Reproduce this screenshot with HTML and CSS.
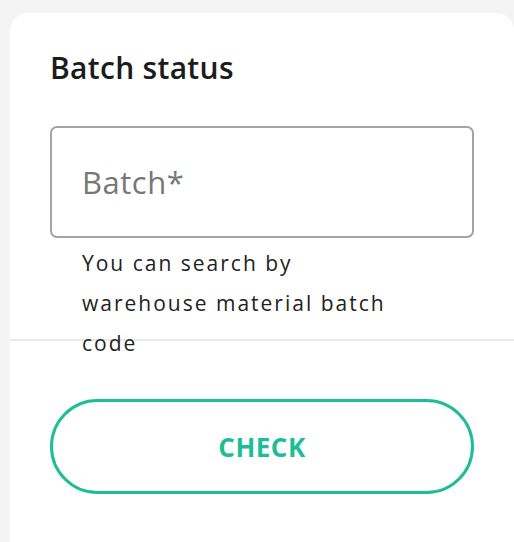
FILE: index.html
```html
<!DOCTYPE html>
<html>
<head>
<meta charset="utf-8">
<link rel="stylesheet" href="styles.css">
</head>
<body>
<div class="card">
  <div class="content">
    <h1 class="title">Batch status</h1>
    <div class="field">
      <span class="placeholder">Batch*</span>
    </div>
    <p class="helper">You can search by<br>warehouse material batch<br>code</p>
  </div>
  <div class="divider"></div>
  <div class="actions">
    <button class="check">CHECK</button>
  </div>
</div>
</body>
</html>
```
FILE: styles.css
```css
html, body {
  margin: 0;
  padding: 0;
  background: #f4f4f4;
  height: 100%;
  overflow: hidden;
}
body {
  font-family: "Open Sans", "Noto Sans", sans-serif;
}
.card {
  margin: 13px 0 0 10px;
  background: #ffffff;
  border-radius: 18px 18px 0 0;
  height: 529px;
}
.content {
  padding: 0 40px;
  height: 325px;
  padding-top: 37px;
  box-sizing: border-box;
}
.title {
  margin: 0;
  font-size: 30px;
  font-weight: 600;
  color: #1c1c1c;
  line-height: 36px;
  letter-spacing: 0.3px;
}
.field {
  margin-top: 40px;
  height: 112px;
  border: 2px solid #a3a3a3;
  border-radius: 7px;
  box-sizing: border-box;
  display: flex;
  align-items: center;
  padding-left: 30px;
}
.placeholder {
  font-size: 31px;
  color: #777777;
  letter-spacing: 0.5px;
}
.helper {
  margin: 5px 0 0 32px;
  font-size: 21px;
  line-height: 40px;
  color: #222222;
  letter-spacing: 2px;
}
.divider {
  height: 2px;
  background: #e8e8e8;
  margin-top: 1px;
}
.actions {
  padding: 0 40px;
  margin-top: 58px;
}
.check {
  display: block;
  width: 100%;
  height: 95px;
  border: 3px solid #1fbc99;
  border-radius: 48px;
  background: #ffffff;
  color: #1fbc99;
  font-family: "Open Sans", "Noto Sans", sans-serif;
  font-size: 26px;
  font-weight: 700;
  letter-spacing: 0.5px;
}
```
